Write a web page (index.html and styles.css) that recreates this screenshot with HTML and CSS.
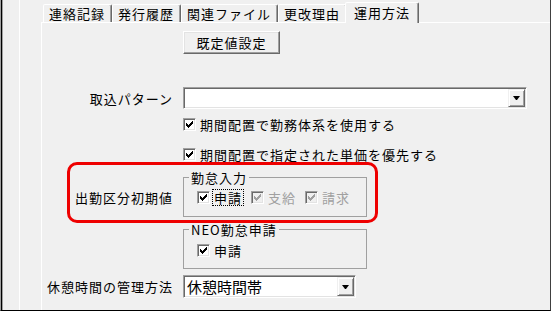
FILE: index.html
```html
<!DOCTYPE html>
<html lang="ja">
<head>
<meta charset="utf-8">
<title>運用方法</title>
<link rel="stylesheet" href="styles.css">
</head>
<body>
<div class="frame">
  <div class="pane">
    <div class="tabctl">
      <div class="tabs">
        <div class="tab">連絡記録</div>
        <div class="tab">発行履歴</div>
        <div class="tab">関連ファイル</div>
        <div class="tab">更改理由</div>
        <div class="tab active">運用方法</div>
      </div>
      <div class="panel">
        <div class="row r-btn">
          <div class="label"></div>
          <button class="btn" type="button">既定値設定</button>
        </div>
        <div class="row r-combo1">
          <div class="label">取込パターン</div>
          <div class="combo wide"><span class="value"></span><span class="drop"><i></i></span></div>
        </div>
        <div class="row r-chk1">
          <div class="label"></div>
          <div class="check">
            <span class="cb"><svg viewBox="0 0 7 7" width="7" height="7"><path d="M0 2H1V3H2V4H3V3H4V2H5V1H6V0H7V3H6V4H5V5H4V6H3V7H2V6H1V5H0Z"/></svg></span>
            <span class="txt">期間配置で勤務体系を使用する</span>
          </div>
        </div>
        <div class="row r-chk2">
          <div class="label"></div>
          <div class="check">
            <span class="cb"><svg viewBox="0 0 7 7" width="7" height="7"><path d="M0 2H1V3H2V4H3V3H4V2H5V1H6V0H7V3H6V4H5V5H4V6H3V7H2V6H1V5H0Z"/></svg></span>
            <span class="txt">期間配置で指定された単価を優先する</span>
          </div>
        </div>
        <div class="row r-group1">
          <div class="label at-items">出勤区分初期値</div>
          <fieldset class="group">
            <legend>勤怠入力</legend>
            <div class="items g1">
              <div class="check">
                <span class="cb"><svg viewBox="0 0 7 7" width="7" height="7"><path d="M0 2H1V3H2V4H3V3H4V2H5V1H6V0H7V3H6V4H5V5H4V6H3V7H2V6H1V5H0Z"/></svg></span>
                <span class="txt focus">申請</span>
              </div>
              <div class="check disabled">
                <span class="cb"><svg viewBox="0 0 7 7" width="7" height="7"><path d="M0 2H1V3H2V4H3V3H4V2H5V1H6V0H7V3H6V4H5V5H4V6H3V7H2V6H1V5H0Z"/></svg></span>
                <span class="txt">支給</span>
              </div>
              <div class="check disabled">
                <span class="cb"><svg viewBox="0 0 7 7" width="7" height="7"><path d="M0 2H1V3H2V4H3V3H4V2H5V1H6V0H7V3H6V4H5V5H4V6H3V7H2V6H1V5H0Z"/></svg></span>
                <span class="txt">請求</span>
              </div>
            </div>
          </fieldset>
        </div>
        <div class="row r-group2">
          <div class="label"></div>
          <fieldset class="group">
            <legend>NEO勤怠申請</legend>
            <div class="items g2">
              <div class="check">
                <span class="cb"><svg viewBox="0 0 7 7" width="7" height="7"><path d="M0 2H1V3H2V4H3V3H4V2H5V1H6V0H7V3H6V4H5V5H4V6H3V7H2V6H1V5H0Z"/></svg></span>
                <span class="txt">申請</span>
              </div>
            </div>
          </fieldset>
        </div>
        <div class="row r-combo2">
          <div class="label">休憩時間の管理方法</div>
          <div class="combo narrow"><span class="value">休憩時間帯</span><span class="drop"><i></i></span></div>
        </div>
        <div class="annot"></div>
      </div>
    </div>
  </div>
</div>
</body>
</html>
```

FILE: styles.css
```css
html, body {
  margin: 0;
  padding: 0;
}

body {
  background: #f0f0f0;
  font-family: "Noto Sans CJK JP", "Noto Sans", sans-serif;
  font-size: 13px;
  line-height: 15px;
  letter-spacing: 1px;
  color: #000;
}

.frame {
  display: flex;
  width: 551px;
  height: 311px;
  box-sizing: border-box;
  border-left: 1px solid #a0a0a0;
  border-right: 1px solid #404040;
  border-bottom: 1px solid #000;
  box-shadow: inset 1px 0 0 #000, inset 2px 0 0 #a0a0a0;
  padding-left: 18px;
  overflow: hidden;
}

.pane {
  flex: 1;
  display: flex;
  border-left: 1px solid #fff;
  padding-left: 21px;
}

.tabctl {
  flex: 1;
  display: flex;
  flex-direction: column;
}

.tabs {
  display: flex;
  align-items: flex-end;
  height: 22px;
  padding-left: 2px;
  flex: none;
}

.tab {
  height: 18px;
  box-sizing: border-box;
  padding: 1px 6px 0 5px;
  border: 1px solid;
  border-bottom: 0;
  border-color: #fff #696969 transparent #fff;
  box-shadow: inset -1px 0 0 #a0a0a0;
  border-radius: 2px 2px 0 0;
  line-height: 16px;
  white-space: nowrap;
  background: #f0f0f0;
}

.tab.active {
  height: 21px;
  margin: 0 -2px -1px;
  padding: 2px 8px 0;
  position: relative;
  z-index: 1;
}

.panel {
  flex: 1;
  position: relative;
  border-top: 1px solid #fff;
  border-left: 1px solid #fff;
}

.row {
  display: flex;
  align-items: center;
}

.label {
  width: 141px;
  flex: none;
  box-sizing: border-box;
  padding-right: 10px;
  text-align: right;
  white-space: nowrap;
}

.r-btn { margin-top: 8px; }
.r-combo1 { margin-top: 33px; }
.r-chk1 { margin-top: 7px; }
.r-chk2 { margin-top: 13px; }
.r-group1 { margin-top: 7px; align-items: flex-start; }
.r-group2 { margin-top: 5px; align-items: flex-start; }
.r-combo2 { margin-top: 6px; }

.label.at-items {
  margin-top: 19px;
  line-height: 17px;
}

.btn {
  width: 97px;
  height: 23px;
  margin: 0;
  padding: 0;
  font: inherit;
  letter-spacing: 1px;
  color: #000;
  background: #f0f0f0;
  border: 1px solid;
  border-color: #fff #696969 #696969 #fff;
  box-shadow: inset -1px -1px 0 #a0a0a0, inset 1px 1px 0 #e3e3e3;
  border-radius: 0;
}

.combo {
  display: flex;
  box-sizing: border-box;
  height: 22px;
  padding: 1px;
  border: 1px solid;
  border-color: #a0a0a0 #fff #fff #a0a0a0;
  box-shadow: inset 1px 1px 0 #696969, inset -1px -1px 0 #e3e3e3;
  background: #fff;
}

.combo.wide { width: 344px; }

.combo.narrow {
  width: 173px;
  height: 23px;
}

.value {
  flex: 1;
  padding-left: 2px;
  font-size: 15px;
  line-height: 19px;
  letter-spacing: 0;
  white-space: nowrap;
  overflow: hidden;
}

.drop {
  width: 17px;
  flex: none;
  box-sizing: border-box;
  background: #f0f0f0;
  border: 1px solid;
  border-color: #f0f0f0 #696969 #696969 #f0f0f0;
  box-shadow: inset 1px 1px 0 #fff, inset -1px -1px 0 #a0a0a0;
  display: flex;
  align-items: center;
  justify-content: center;
}

.drop i {
  display: block;
  width: 1px;
  height: 0;
  border-left: 3px solid transparent;
  border-right: 3px solid transparent;
  border-top: 4px solid #000;
}

.check {
  display: flex;
  align-items: center;
  gap: 2px;
  white-space: nowrap;
}

.cb {
  width: 13px;
  height: 13px;
  flex: none;
  box-sizing: border-box;
  border: 1px solid;
  border-color: #a0a0a0 #fff #fff #a0a0a0;
  box-shadow: inset 1px 1px 0 #696969, inset -1px -1px 0 #e3e3e3;
  background: #fff;
  display: flex;
  align-items: center;
  justify-content: center;
}

.cb svg {
  display: block;
  shape-rendering: crispEdges;
}

.cb path {
  fill: #000;
}

.txt {
  border: 1px dotted transparent;
  padding: 0 1px;
  line-height: 15px;
}

.txt.focus {
  border-color: #000;
}

.check.disabled .cb {
  background: #f0f0f0;
}

.check.disabled .cb path {
  fill: #a0a0a0;
}

.check.disabled .txt {
  color: #a0a0a0;
}

.group {
  margin: 0;
  padding: 0;
  width: 184px;
  min-width: 0;
  box-sizing: border-box;
  border: 1px solid #a0a0a0;
}

.group legend {
  margin-left: 5px;
  padding: 0 2px;
  line-height: 15px;
}

.items {
  display: flex;
  align-items: center;
  gap: 7px;
  padding-left: 13px;
}

.items.g1 {
  padding-top: 4px;
  padding-bottom: 10px;
}

.items.g2 {
  padding-top: 5px;
  padding-bottom: 9px;
}

.annot {
  position: absolute;
  left: 25px;
  top: 139px;
  width: 311px;
  height: 61px;
  box-sizing: border-box;
  border: 3px solid #ee0000;
  border-radius: 10px;
  pointer-events: none;
}
```
